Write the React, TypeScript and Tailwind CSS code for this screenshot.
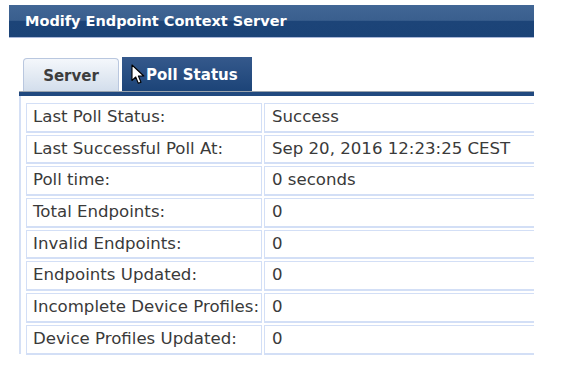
const rows: [string, string][] = [
  ['Last Poll Status:', 'Success'],
  ['Last Successful Poll At:', 'Sep 20, 2016 12:23:25 CEST'],
  ['Poll time:', '0 seconds'],
  ['Total Endpoints:', '0'],
  ['Invalid Endpoints:', '0'],
  ['Endpoints Updated:', '0'],
  ['Incomplete Device Profiles:', '0'],
  ['Device Profiles Updated:', '0'],
];

function Cursor() {
  return (
    <svg className="absolute left-[9px] top-[7px]" width="15" height="21" viewBox="0 0 15 21">
      <path d="M1 1 L1 16.5 L4.7 13 L7.3 19.3 L10 18.2 L7.4 12 L12.8 12 Z" fill="#fff" stroke="#000" strokeWidth="1.1" strokeLinejoin="round" />
    </svg>
  );
}

export default function App() {
  return (
    <div className="w-[581px] h-[372px] bg-white pt-[5px]" style={{ fontFamily: '"DejaVu Sans", Verdana, sans-serif' }}>
      <div className="ml-[9px] w-[525px] border-b border-[#a9b7d9]">
        <div className="h-[32px] flex items-center pl-[16px] pt-[1px] bg-[linear-gradient(to_bottom,#416695_0%,#3a5f8e_48%,#1c4478_50%,#1b4377_100%)]">
          <span className="text-white font-bold text-[14.5px]">Modify Endpoint Context Server</span>
        </div>
      </div>

      <div className="ml-[19px] w-[515px] mt-[19px]">
        <div className="flex items-end pl-[4px] gap-[3px] h-[34px]">
          <div className="w-[96px] h-[33px] pt-[3px] rounded-t-[4px] border border-b-0 border-[#b9c7df] bg-[linear-gradient(to_bottom,#f4f7fb,#d3deec)] flex items-center justify-center">
            <span className="text-[#3d3d3d] font-bold text-[15px]">Server</span>
          </div>
          <div className="relative w-[130px] h-[34px] pt-[3px] bg-[linear-gradient(to_bottom,#35598c,#1c4478)] flex items-center pl-[24px]">
            <Cursor />
            <span className="text-white font-bold text-[15px]">Poll Status</span>
          </div>
        </div>
        <div className="h-[1px] bg-[#9aa3ad]" />
        <div className="h-[4px] bg-[#21497f]" />
        <div className="border-l-2 border-[#d5e0f5] pl-[5px] pt-[7px] h-[258px]">
          <table className="w-[512px] table-fixed border-separate border-spacing-[2px] -m-[2px] text-[16.6px] text-[#3a3a3a]">
            <tbody>
              {rows.map(([k, v], i) => (
                <tr key={i}>
                  <td className="h-[29.7px] p-0 w-[236px] border border-b-2 border-[#d3dff6] pl-[6px] whitespace-nowrap">{k}</td>
                  <td className="h-[29.7px] p-0 border border-b-2 border-r-0 border-[#d3dff6] pl-[7px] whitespace-nowrap">{v}</td>
                </tr>
              ))}
            </tbody>
          </table>
        </div>
      </div>
    </div>
  );
}
